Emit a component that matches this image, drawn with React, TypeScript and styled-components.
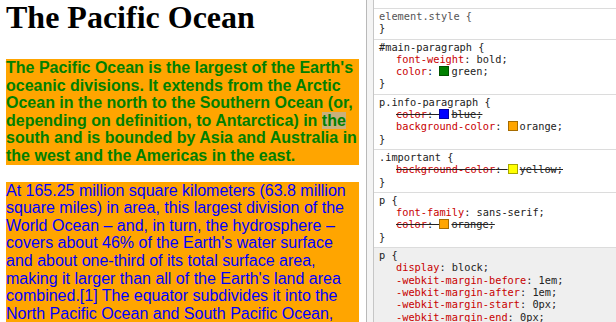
import React from 'react';
import styled, { createGlobalStyle } from 'styled-components';

const GlobalStyle = createGlobalStyle`
  html, body {
    margin: 0;
    padding: 0;
    background: #fff;
  }
`;

const Screen = styled.div`
  display: flex;
  width: 616px;
  height: 322px;
  overflow: hidden;
`;

const Page = styled.div`
  width: 366px;
  flex-shrink: 0;
  box-sizing: border-box;
  padding: 0 7px 0 6px;
`;

const Heading = styled.h1`
  font-family: 'Liberation Serif', 'Times New Roman', serif;
  font-weight: bold;
  font-size: 32px;
  line-height: 35px;
  margin: 0 0 24px;
  color: #000;
`;

const Paragraph = styled.p<{ $main?: boolean }>`
  font-family: 'Liberation Sans', Arial, sans-serif;
  font-size: 16px;
  line-height: 17.6px;
  margin: 0 0 17px;
  background-color: #ffa500;
  color: ${(p) => (p.$main ? '#008000' : '#0000ff')};
  font-weight: ${(p) => (p.$main ? 'bold' : 'normal')};
`;

const Hover = styled.span`
  background: #c9b07c;
`;

const Splitter = styled.div`
  width: 6px;
  flex-shrink: 0;
  background: #f4f4f4;
  border-left: 1px solid #b9b9b9;
  border-right: 1px solid #c6c6c6;
`;

const Styles = styled.div`
  flex: 1;
  padding-top: 8px;
  font-family: 'DejaVu Sans Mono', 'Liberation Mono', monospace;
  font-size: 10.3px;
  line-height: 12.3px;
  color: #222;
`;

const Rule = styled.div<{ $agent?: boolean }>`
  border-top: 1px solid #dcdcdc;
  padding: 1px 0 4px 5px;
  background: ${(p) => (p.$agent ? '#efefef' : '#fff')};
  ${(p) => (p.$agent ? 'min-height: 100px;' : '')}
`;

const Selector = styled.div<{ $dim?: boolean }>`
  color: ${(p) => (p.$dim ? '#555' : '#222')};
  white-space: pre;
`;

const Decl = styled.div<{ $struck?: boolean }>`
  padding-left: 17px;
  white-space: pre;
  text-decoration: ${(p) => (p.$struck ? 'line-through' : 'none')};
`;

const PropName = styled.span`
  color: #c80000;
`;

const Swatch = styled.span<{ $c: string }>`
  display: inline-block;
  width: 8px;
  height: 8px;
  margin-right: 2px;
  vertical-align: -1px;
  border: 1px solid rgba(0, 0, 0, 0.35);
  background: ${(p) => p.$c};
`;

type Prop = { name: string; value: string; swatch?: string; struck?: boolean };
type StyleRule = { selector: string; dim?: boolean; agent?: boolean; props: Prop[] };

const RULES: StyleRule[] = [
  { selector: 'element.style', dim: true, props: [] },
  {
    selector: '#main-paragraph',
    props: [
      { name: 'font-weight', value: 'bold' },
      { name: 'color', value: 'green', swatch: '#008000' },
    ],
  },
  {
    selector: 'p.info-paragraph',
    props: [
      { name: 'color', value: 'blue', swatch: '#0000ff', struck: true },
      { name: 'background-color', value: 'orange', swatch: '#ffa500' },
    ],
  },
  {
    selector: '.important',
    props: [{ name: 'background-color', value: 'yellow', swatch: '#ffff00', struck: true }],
  },
  {
    selector: 'p',
    props: [
      { name: 'font-family', value: 'sans-serif' },
      { name: 'color', value: 'orange', swatch: '#ffa500', struck: true },
    ],
  },
  {
    selector: 'p',
    agent: true,
    props: [
      { name: 'display', value: 'block' },
      { name: '-webkit-margin-before', value: '1em' },
      { name: '-webkit-margin-after', value: '1em' },
      { name: '-webkit-margin-start', value: '0px' },
      { name: '-webkit-margin-end', value: '0px' },
    ],
  },
];

const App: React.FC = () => {
  return (
    <Screen>
      <GlobalStyle />
      <Page>
        <Heading>The Pacific Ocean</Heading>
        <Paragraph $main>
          The Pacific Ocean is the largest of the Earth's oceanic divisions. It extends from
          the Arctic Ocean in the north to the Southern Ocean (or, depending on definition, to
          Antarctica) in <Hover>the</Hover> south and is bounded by Asia and Australia in the
          west and the Americas in the east.
        </Paragraph>
        <Paragraph>
          At 165.25 million square kilometers (63.8 million square miles) in area, this
          largest division of the World Ocean – and, in turn, the hydrosphere – covers about
          46% of the Earth's water surface and about one-third of its total surface area,
          making it larger than all of the Earth's land area combined.[1] The equator
          subdivides it into the North Pacific Ocean and South Pacific Ocean, with two
          exceptions.
        </Paragraph>
      </Page>
      <Splitter />
      <Styles>
        {RULES.map((r, i) => (
          <Rule key={i} $agent={r.agent}>
            <Selector $dim={r.dim}>{r.selector} {'{'}</Selector>
            {r.props.map((p) => (
              <Decl key={p.name} $struck={p.struck}>
                <PropName>{p.name}</PropName>: {p.swatch && <Swatch $c={p.swatch} />}
                {p.value};
              </Decl>
            ))}
            <Selector>{'}'}</Selector>
          </Rule>
        ))}
      </Styles>
    </Screen>
  );
};

export default App;
